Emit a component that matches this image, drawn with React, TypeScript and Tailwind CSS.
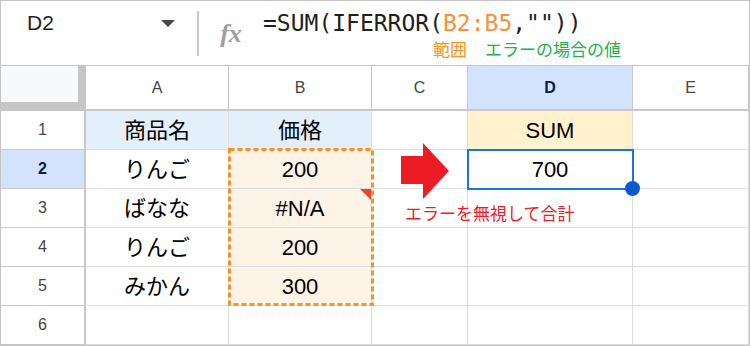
import type { ReactNode } from 'react';

const COLS = ['A', 'B', 'C', 'D', 'E'];

const rows: { n: number; cells: (string | null)[] }[] = [
  { n: 1, cells: ['商品名', '価格', null, 'SUM', null] },
  { n: 2, cells: ['りんご', '200', null, '700', null] },
  { n: 3, cells: ['ばなな', '#N/A', null, null, null] },
  { n: 4, cells: ['りんご', '200', null, null, null] },
  { n: 5, cells: ['みかん', '300', null, null, null] },
  { n: 6, cells: [null, null, null, null, null] },
];

function cellBg(r: number, c: number) {
  if (r === 1 && (c === 0 || c === 1)) return 'bg-[#e3effb]';
  if (r === 1 && c === 3) return 'bg-[#fff2cc]';
  if (c === 1 && r >= 2 && r <= 5) return 'bg-[#fdf3e6]';
  return 'bg-white';
}

function Cell({ className, children }: { className?: string; children?: ReactNode }) {
  return (
    <div className={`flex items-center justify-center border-r border-b border-[#dedede] ${className ?? ''}`}>
      {children}
    </div>
  );
}

export default function App() {
  return (
    <div
      className="w-[750px] h-[346px] border border-[#c4c4c4] bg-white overflow-hidden text-[#1f1f1f]"
      style={{ fontFamily: '"Liberation Sans", "Noto Sans CJK JP", sans-serif' }}
    >
      {/* Formula bar */}
      <div className="h-[65px] border-b border-[#c4c4c4] flex">
        <div className="w-[196px] flex items-start pt-[9px] pl-[26px] pr-[22px] justify-between">
          <span className="text-[21px] leading-[26px]">D2</span>
          <svg width="14" height="8" viewBox="0 0 14 8" className="mt-[10px]">
            <polygon points="0,0 14,0 7,7" fill="#444746" />
          </svg>
        </div>
        <div className="w-[2px] h-[45px] mt-[10px] bg-[#c8c8c8]" />
        <div className="w-[64px] flex justify-center pt-[18px]">
          <span
            className="text-[#9aa0a6] text-[26px] leading-[30px] italic font-bold"
            style={{ fontFamily: '"Liberation Serif", serif' }}
          >
            fx
          </span>
        </div>
        <div className="flex flex-col pt-[8px]">
          <div
            className="text-[23px] leading-[28px] whitespace-pre"
            style={{ fontFamily: '"DejaVu Sans Mono", monospace' }}
          >
            =SUM(IFERROR(<span className="text-[#f6923a]">B2:B5</span>,""))
          </div>
          <div className="flex text-[17px] leading-[22px] mt-[1px]" style={{ fontFamily: '"Noto Sans CJK JP", sans-serif' }}>
            <span className="ml-[170px] text-[#f7931e]">範囲</span>
            <span className="ml-[18px] text-[#22b14c]">エラーの場合の値</span>
          </div>
        </div>
      </div>

      {/* Grid */}
      <div className="relative grid grid-cols-[85px_143px_143px_96px_165px_116px] grid-rows-[45px_repeat(6,39px)]">
        <div className="bg-[#f8f9fa] border-r-[8px] border-b-[9px] border-[#c6c6c6]" />
        {COLS.map((c) => (
          <div
            key={c}
            className={`flex items-center justify-center border-r border-b-2 border-[#c8c8c8] text-[16px] ${
              c === 'D' ? 'bg-[#d3e3fd] font-bold text-[#0b1d42]' : 'bg-white text-[#444746]'
            }`}
          >
            {c}
          </div>
        ))}
        {rows.map((row) => (
          <div key={row.n} className="contents">
            <div
              className={`flex items-center justify-center border-r-2 border-b border-[#c8c8c8] text-[16px] ${
                row.n === 2 ? 'bg-[#d3e3fd] font-bold text-[#0b1d42]' : 'bg-white text-[#444746]'
              }`}
            >
              {row.n}
            </div>
            {row.cells.map((v, ci) => (
              <Cell key={ci} className={`${cellBg(row.n, ci)} text-[22px] text-black`}>
                {v}
              </Cell>
            ))}
          </div>
        ))}

        {/* error marker on B3 */}
        <svg className="absolute left-[359px] top-[123px]" width="11" height="11" viewBox="0 0 11 11">
          <polygon points="0,0 11,0 11,11" fill="#e8452c" />
        </svg>

        {/* copied range B2:B5 */}
        <svg className="absolute left-[227px] top-[82px]" width="146" height="158" viewBox="0 0 146 158">
          <rect x="1.5" y="1.5" width="143" height="155" fill="none" stroke="#f7931e" strokeWidth="3" strokeDasharray="5 3" />
        </svg>

        {/* arrow */}
        <svg className="absolute left-[400px] top-[77px]" width="48" height="56" viewBox="0 0 48 56">
          <polygon points="0,13 22,13 22,0 48,28 22,56 22,41 0,41" fill="#ed1c24" />
        </svg>

        <span
          className="absolute left-[404px] top-[135px] text-[17px] leading-[24px] text-[#ed1c24] whitespace-nowrap"
          style={{ fontFamily: '"Noto Sans CJK JP", sans-serif' }}
        >
          エラーを無視して合計
        </span>

        {/* selection D2 */}
        <div className="absolute left-[466px] top-[83px] w-[167px] h-[41px] border-2 border-[#1a73e8]" />
        <div className="absolute left-[624px] top-[115px] w-[15px] h-[15px] rounded-full bg-[#0b57d0]" />
      </div>
    </div>
  );
}
